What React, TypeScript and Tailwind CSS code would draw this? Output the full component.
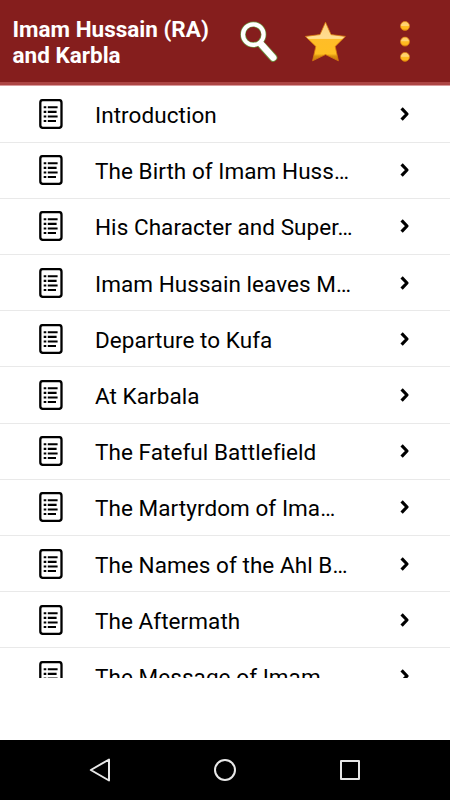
import React from 'react';

const chapters = [
  'Introduction',
  'The Birth of Imam Huss…',
  'His Character and Super…',
  'Imam Hussain leaves M…',
  'Departure to Kufa',
  'At Karbala',
  'The Fateful Battlefield',
  'The Martyrdom of Ima…',
  'The Names of the Ahl B…',
  'The Aftermath',
  'The Message of Imam…',
];

const SearchIcon = () => (
  <svg className="w-10 h-[42px]" viewBox="0 0 40 42" fill="none" strokeLinecap="round">
    <g stroke="#6b9440">
      <circle cx="15.3" cy="14.6" r="10.3" strokeWidth="5.6" />
      <path d="M24.5 26 35.2 37.6" strokeWidth="8.2" />
    </g>
    <g stroke="#ffffff">
      <circle cx="15.3" cy="14.6" r="10.3" strokeWidth="4.2" />
      <path d="M23 24 35.2 37.6" strokeWidth="6.6" />
    </g>
  </svg>
);

const StarIcon = () => (
  <svg className="w-[42px] h-[42px]" viewBox="0 0 42 42">
    <defs>
      <linearGradient id="star" x1="0" y1="0" x2="0" y2="1">
        <stop offset="0" stopColor="#ffd27a" />
        <stop offset="0.42" stopColor="#ffdd91" />
        <stop offset="0.44" stopColor="#ffbd28" />
        <stop offset="0.82" stopColor="#ffbf22" />
        <stop offset="0.88" stopColor="#d9920f" />
        <stop offset="1" stopColor="#c67d10" />
      </linearGradient>
    </defs>
    <path
      d="M21.5 2.2 27 14.6 41.4 16.4 31.2 26.4 34.4 40.8 21.5 34.6 8.6 40.8 11.8 26.4 1.4 16.4 16 14.6Z"
      fill="url(#star)"
      stroke="#d97a0c"
      strokeWidth="0.8"
      strokeLinejoin="round"
    />
  </svg>
);

const MenuIcon = () => (
  <svg className="w-3 h-[42px]" viewBox="0 0 12 42">
    <defs>
      <linearGradient id="dot" x1="0" y1="0" x2="0" y2="1">
        <stop offset="0" stopColor="#ffc95c" />
        <stop offset="0.44" stopColor="#ffd679" />
        <stop offset="0.5" stopColor="#ffbd25" />
        <stop offset="0.8" stopColor="#ffb91c" />
        <stop offset="1" stopColor="#e08c0b" />
      </linearGradient>
    </defs>
    <g fill="url(#dot)" stroke="#dc8110" strokeWidth="0.7">
      <circle cx="6" cy="6" r="4.5" />
      <circle cx="6" cy="21.6" r="4.5" />
      <circle cx="6" cy="36.9" r="4.5" />
    </g>
  </svg>
);

const ListIcon = () => (
  <svg className="w-6 h-[30px] shrink-0" viewBox="0 0 24 30" fill="none" stroke="#000000">
    <rect x="1.3" y="1.1" width="21.2" height="27.8" rx="2.6" strokeWidth="2.3" />
    <path d="M4.7 8.3h2.6M4.7 12.9h2.6M4.7 17.5h2.6M4.7 22h2.6" strokeWidth="2.1" />
    <path d="M8.8 8.3h9.8M8.8 12.9h8.8M8.8 17.5h9.8M8.8 22h8.2" strokeWidth="2.1" />
  </svg>
);

const ChevronIcon = () => (
  <svg className="w-[10px] h-[14px] shrink-0" viewBox="0 0 10 14" fill="none" stroke="#000000" strokeWidth="3.2">
    <path d="M1.6 1.4 7 7 1.6 12.6" strokeLinejoin="round" />
  </svg>
);

const Row = ({ title }: { title: string }) => (
  <li className="flex items-center h-[56.2px] shrink-0 pl-[39px] border-b border-[#e9e9e9]">
    <ListIcon />
    <span className="ml-8 w-[305px] pt-[2px] text-[22.5px] leading-7 tracking-[0.06px] whitespace-nowrap">{title}</span>
    <ChevronIcon />
  </li>
);

const App: React.FC = () => {
  return (
    <div className="flex flex-col w-[450px] h-[800px] overflow-hidden bg-white text-black font-['Roboto',sans-serif]">
      <header className="flex h-[85px] shrink-0 pl-[12.5px] bg-[#851e1d] border-b-[3px] border-[#ac4544]">
        <h1 className="w-[225.5px] pt-4 text-[22.5px] leading-[26px] font-bold text-white whitespace-nowrap">
          Imam Hussain (RA)
          <br />
          and Karbla
        </h1>
        <div className="flex pt-5">
          <SearchIcon />
          <div className="ml-[26px]">
            <StarIcon />
          </div>
          <div className="ml-[52.5px]">
            <MenuIcon />
          </div>
        </div>
      </header>

      <ul className="flex flex-col h-[592.5px] shrink-0 overflow-hidden border-t border-[#d99a9c] pt-[0.5px]">
        {chapters.map((title) => (
          <Row key={title} title={title} />
        ))}
      </ul>

      <div className="flex-grow" />

      <nav className="flex items-center justify-between h-[60px] shrink-0 px-[88px] bg-black">
        <svg className="w-6 h-6" viewBox="0 0 24 24" fill="none" stroke="#e8e8e8" strokeWidth="2" strokeLinejoin="round">
          <path d="M2.8 12 21 1.5v21Z" />
        </svg>
        <svg className="w-6 h-6" viewBox="0 0 24 24" fill="none" stroke="#e8e8e8" strokeWidth="2">
          <circle cx="12" cy="12" r="10" />
        </svg>
        <svg className="w-6 h-6" viewBox="0 0 24 24" fill="none" stroke="#e8e8e8" strokeWidth="2" strokeLinejoin="round">
          <rect x="3" y="3" width="18" height="18" />
        </svg>
      </nav>
    </div>
  );
};

export default App;
